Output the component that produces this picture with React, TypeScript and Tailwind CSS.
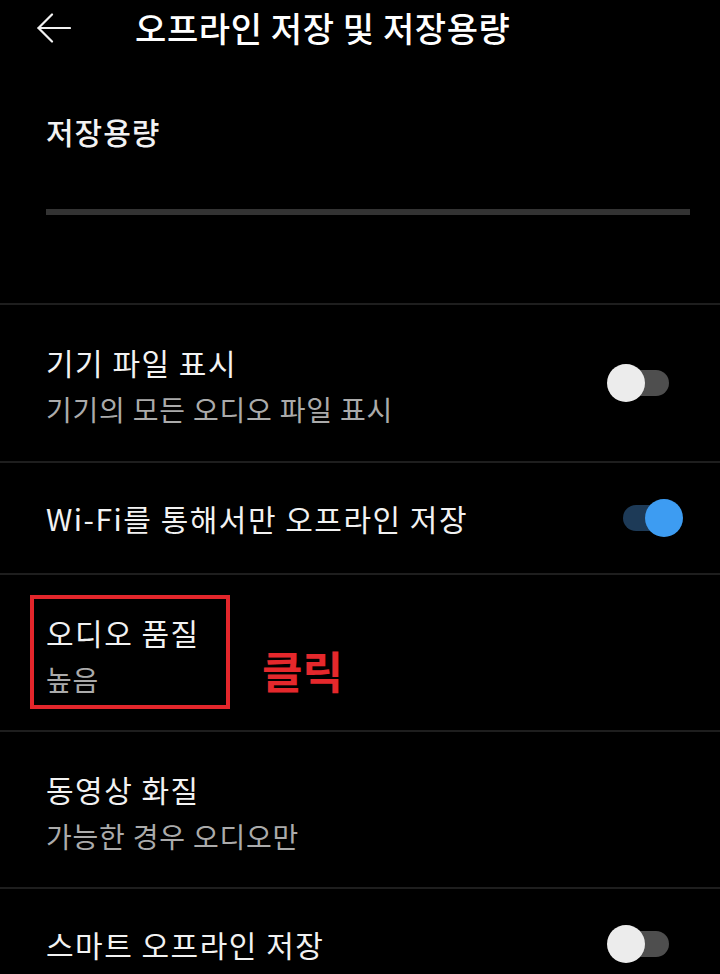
import React from 'react';

const FONT = { fontFamily: '"Noto Sans CJK KR", "Noto Sans", sans-serif' };

function Toggle({ on }: { on: boolean }) {
  return (
    <div className={`relative w-[46px] h-[26px] rounded-full ${on ? 'bg-[#1d3a57]' : 'bg-[#4e4e4e]'}`}>
      <div
        className={`absolute top-1/2 -translate-y-1/2 w-[38px] h-[38px] rounded-full ${
          on ? 'right-[-14px] bg-[#3d9cf2]' : 'left-[-16px] bg-[#ececec]'
        }`}
      />
    </div>
  );
}

interface RowProps {
  title: string;
  subtitle?: string;
  toggle?: boolean;
  height: string;
  children?: React.ReactNode;
}

function Row({ title, subtitle, toggle, height, children }: RowProps) {
  return (
    <div className={`relative flex items-center justify-between border-t-2 border-[#1e1e1e] pl-[46px] pr-[51px] ${height}`}>
      {subtitle ? (
        <div className="flex flex-col pt-[5px]">
          <span className="text-[30px] leading-[40px] tracking-[1.5px] text-[#f2f2f2]">{title}</span>
          <span className="mt-[7px] text-[28px] leading-[40px] tracking-[0.8px] text-[#ababab]">{subtitle}</span>
        </div>
      ) : (
        <span className="text-[30px] leading-[40px] tracking-[1.5px] text-[#f2f2f2]">{title}</span>
      )}
      {toggle !== undefined && <Toggle on={toggle} />}
      {children}
    </div>
  );
}

export default function App() {
  return (
    <div className="w-[720px] h-[974px] overflow-hidden bg-black" style={FONT}>
      {/* Header */}
      <div className="flex items-center h-[60px] pb-[5px] pl-[37px]">
        <svg width="34" height="30" viewBox="0 0 34 30" fill="none" stroke="#f2f2f2" strokeWidth="2.2" strokeLinecap="round" strokeLinejoin="round">
          <path d="M1.5 15 H33" />
          <path d="M15 1.5 L1.5 15 L15 28.5" />
        </svg>
        <h1 className="ml-[64px] text-[34px] leading-[40px] tracking-[0.6px] font-medium text-white">오프라인 저장 및 저장용량</h1>
      </div>

      {/* Storage */}
      <div className="pl-[46px] pr-[30px] pt-[51px] pb-[88px]">
        <div className="text-[30px] leading-[40px] tracking-[1px] font-medium text-[#f2f2f2]">저장용량</div>
        <div className="mt-[58px] h-[6px] bg-[#333333]" />
      </div>

      <Row title="기기 파일 표시" subtitle="기기의 모든 오디오 파일 표시" toggle={false} height="h-[158px]" />
      <Row title="Wi-Fi를 통해서만 오프라인 저장" toggle={true} height="h-[112px]" />
      <Row title="오디오 품질" subtitle="높음" height="h-[157px]">
        <div className="absolute left-[30px] top-[20px] w-[200px] h-[114px] border-4 border-[#e3262b]" />
        <span className="absolute left-[262px] top-[70px] text-[44px] leading-[50px] font-bold text-[#e5282c]">클릭</span>
      </Row>
      <Row title="동영상 화질" subtitle="가능한 경우 오디오만" height="h-[157px]" />
      <Row title="스마트 오프라인 저장" toggle={false} height="h-[112px]" />
    </div>
  );
}
